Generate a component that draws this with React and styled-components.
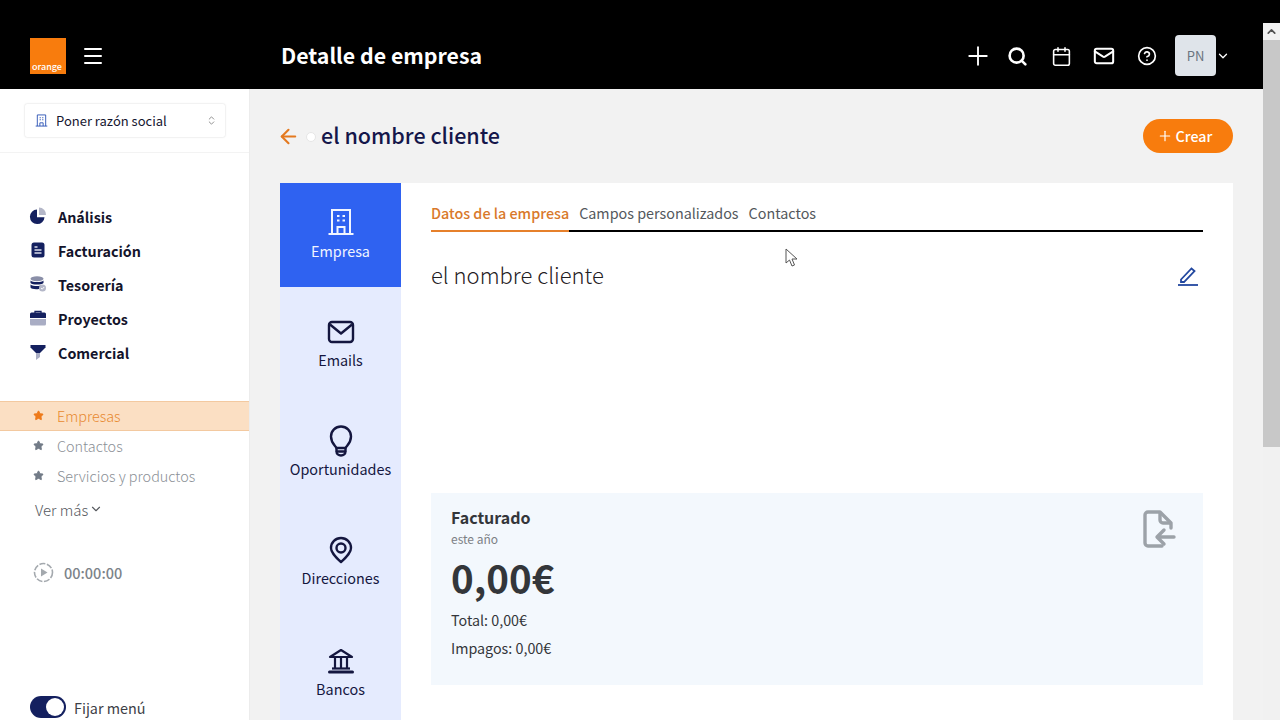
import styled, { createGlobalStyle } from "styled-components";
import { Plus, Search, Calendar, Mail, CircleHelp, ChevronDown, ChevronUp, ChevronsUpDown, Menu, ArrowLeft, Star } from "lucide-react";

const Global = createGlobalStyle`
  html, body {
    margin: 0;
    height: 100%;
    overflow: hidden;
    background: #000;
  }
  * { box-sizing: border-box; }
  body {
    font-family: "Noto Sans CJK JP", "Noto Sans", sans-serif;
  }
`;

const Page = styled.div`
  width: 1280px;
  height: 720px;
  display: flex;
  overflow: hidden;
  position: relative;
`;

const Main = styled.div`
  width: 1263px;
  display: flex;
  flex-direction: column;
`;

const Scrollbar = styled.div`
  width: 17px;
  margin-top: 23px;
  background: #f1f1f1;
  display: flex;
  flex-direction: column;
`;

const ScrollArrow = styled.div`
  height: 17px;
  display: flex;
  align-items: center;
  justify-content: center;
  color: #505050;
`;

const ScrollThumb = styled.div`
  height: 407px;
  background: #c8c8c8;
`;

const Header = styled.header`
  height: 89px;
  flex: none;
  background: #000;
  display: flex;
  align-items: center;
  padding: 23px 33px 0 30px;
  color: #fff;
`;

const Logo = styled.div`
  width: 36px;
  height: 36px;
  background: #f87c0d;
  display: flex;
  align-items: flex-end;
  padding: 0 0 1px 2px;
  color: #fff;
  font-size: 9px;
  font-weight: 500;
  line-height: 12px;
`;

const Burger = styled.div`
  margin-left: 15px;
  width: 24px;
  height: 24px;
  display: flex;
  color: #fff;
`;

const HeaderTitle = styled.h1`
  margin: 0 0 2px 176px;
  font-size: 21.3px;
  font-weight: 700;
  line-height: 30px;
  flex: 1;
`;

const HeaderIcons = styled.div`
  display: flex;
  align-items: center;
`;

const HeaderIcon = styled.div`
  width: 22px;
  height: 22px;
  display: flex;
  align-items: center;
  justify-content: center;
  margin-right: ${(p) => p.$gap}px;
  svg {
    flex: none;
  }
`;

const Avatar = styled.div`
  width: 41px;
  height: 41px;
  margin-top: -1px;
  border-radius: 4px;
  background: #dfe4ea;
  color: #6b7480;
  font-size: 13px;
  display: flex;
  align-items: center;
  justify-content: center;
`;

const Body = styled.div`
  flex: 1;
  min-height: 0;
  display: flex;
`;

const Sidebar = styled.aside`
  width: 250px;
  flex: none;
  background: #fff;
  border-right: 1px solid #ececec;
  display: flex;
  flex-direction: column;
`;

const CompanyBox = styled.div`
  height: 64px;
  flex: none;
  padding: 15px 25px 0;
  border-bottom: 1px solid #f3f3f3;
`;

const CompanySelect = styled.div`
  width: 200px;
  height: 33px;
  border-radius: 2px;
  box-shadow: 0 0 2px rgba(0, 0, 0, 0.2);
  display: flex;
  align-items: center;
  padding: 0 8px 0 10px;
  color: #15162f;
  font-size: 13px;
  gap: 8px;
  span {
    flex: 1;
  }
`;

const MainNav = styled.nav`
  margin-top: 46px;
  padding-left: 30px;
  display: flex;
  flex-direction: column;
`;

const MainNavItem = styled.div`
  height: 34px;
  display: flex;
  align-items: center;
  gap: 12px;
  color: #14142b;
  font-size: 14.3px;
  font-weight: 700;
`;

const NavGlyph = styled.svg`
  width: 16px;
  height: 16px;
  flex: none;
  overflow: visible;
`;

const SubNav = styled.div`
  margin-top: 32px;
  display: flex;
  flex-direction: column;
`;

const SubNavItem = styled.div`
  height: 30px;
  display: flex;
  align-items: center;
  padding: 0 0 2px 33px;
  gap: 13px;
  font-size: 14.4px;
  font-weight: 300;
  color: ${(p) => (p.$active ? "#e8892f" : "#8b9096")};
  background: ${(p) => (p.$active ? "#fbdfc3" : "transparent")};
  box-shadow: ${(p) => (p.$active ? "inset 0 1px 0 #f3c9a0, inset 0 -1px 0 #f3c9a0" : "none")};
  svg {
    color: ${(p) => (p.$active ? "#ee7a1a" : "#727b87")};
    fill: currentColor;
  }
`;

const SeeMore = styled.div`
  margin: 3px 0 0 35px;
  height: 30px;
  display: flex;
  align-items: center;
  gap: 1px;
  font-size: 15px;
  font-weight: 300;
  color: #55595e;
`;

const Timer = styled.div`
  margin: 36px 0 0 33px;
  display: flex;
  align-items: center;
  gap: 10px;
  color: #7c8389;
  font-size: 14.5px;
  font-weight: 500;
  height: 24px;
`;

const PinRow = styled.div`
  margin: auto 0 1px 30px;
  height: 24px;
  display: flex;
  align-items: center;
  gap: 8px;
  font-size: 14.4px;
  color: #3d4047;
`;

const Toggle = styled.div`
  width: 36px;
  height: 22px;
  border-radius: 11px;
  background: #14205f;
  padding: 2px;
  display: flex;
  justify-content: flex-end;
  &::after {
    content: "";
    width: 18px;
    height: 18px;
    border-radius: 50%;
    background: #fff;
  }
`;

const Content = styled.main`
  flex: 1;
  min-width: 0;
  background: #f2f2f2;
  padding: 0 30px;
  display: flex;
  flex-direction: column;
`;

const TitleRow = styled.div`
  height: 94px;
  flex: none;
  display: flex;
  align-items: center;
  padding-bottom: 1px;
`;

const BackArrow = styled(ArrowLeft)`
  flex: none;
  margin: 2px 0 0 -3px;
`;

const BackDot = styled.span`
  width: 10px;
  height: 10px;
  border-radius: 50%;
  background: #fff;
  border: 1px solid #e6e6e6;
  margin: 2px 5px 0 6px;
`;

const PageTitle = styled.h2`
  flex: 1;
  margin: 0 0 2px;
  color: #15164a;
  font-size: 21.5px;
  font-weight: 500;
  line-height: 32px;
`;

const CreateButton = styled.button`
  width: 90px;
  height: 34px;
  border: none;
  border-radius: 17px;
  background: #f87c0d;
  color: #fff;
  font-family: inherit;
  font-size: 14.3px;
  font-weight: 500;
  display: flex;
  align-items: center;
  justify-content: center;
  gap: 3px;
  padding: 0 7px 0 0;
`;

const Card = styled.section`
  flex: 1;
  background: #fff;
  display: flex;
  min-height: 0;
`;

const SideTabs = styled.div`
  width: 121px;
  flex: none;
  background: #e5ebfe;
  display: flex;
  flex-direction: column;
`;

const SideTab = styled.div`
  height: ${(p) => p.$h}px;
  flex: none;
  display: flex;
  flex-direction: column;
  align-items: center;
  padding-top: ${(p) => p.$top}px;
  gap: ${(p) => (p.$active ? 5 : 4)}px;
  font-size: 14.4px;
  line-height: 20px;
  color: ${(p) => (p.$active ? "#f1f5ff" : "#14163f")};
  background: ${(p) => (p.$active ? "#2f62f1" : "transparent")};
  svg {
    width: 28px;
    height: 28px;
    flex: none;
    overflow: visible;
  }
`;

const Panel = styled.div`
  flex: 1;
  min-width: 0;
  padding: 0 30px;
  display: flex;
  flex-direction: column;
`;

const Tabs = styled.div`
  height: 49px;
  flex: none;
  display: flex;
  border-bottom: 2px solid #000;
  gap: 10px;
`;

const Tab = styled.div`
  height: 49px;
  padding-top: 20px;
  font-size: 14.35px;
  line-height: 20px;
  font-weight: ${(p) => (p.$active ? 500 : 400)};
  color: ${(p) => (p.$active ? "#d9792b" : "#53575c")};
  border-bottom: 2px solid ${(p) => (p.$active ? "#e6802b" : "transparent")};
`;

const NameRow = styled.div`
  height: 261px;
  flex: none;
  display: flex;
  justify-content: space-between;
  padding: 27px 4px 0 0;
  color: #1f2023;
  font-size: 22px;
  font-weight: 300;
  line-height: 30px;
  align-items: flex-start;
`;

const EditIcon = styled.svg`
  width: 22px;
  height: 22px;
  margin-top: 5px;
  color: #22479f;
`;

const InvoiceCard = styled.div`
  height: 192px;
  flex: none;
  background: #f3f8fd;
  padding: 14px 20px;
  display: flex;
  justify-content: space-between;
  color: #33363a;
`;

const InvoiceTitle = styled.div`
  font-size: 16px;
  font-weight: 700;
  line-height: 20px;
`;

const InvoiceSub = styled.div`
  margin-top: 3px;
  font-size: 12px;
  line-height: 18px;
  color: #7c8085;
`;

const InvoiceAmount = styled.div`
  font-size: 38.5px;
  font-weight: 700;
  line-height: 50px;
  margin: 4px 0 4px;
`;

const InvoiceLine = styled.div`
  font-size: 14.3px;
  line-height: 28px;
  font-weight: 400;
`;

const InvoiceIcon = styled.svg`
  width: 34px;
  height: 40px;
  margin: 3px 7px 0 0;
  color: #9ca2a8;
`;

const Cursor = styled.svg`
  position: absolute;
  left: 785px;
  top: 248px;
  width: 13px;
  height: 19px;
`;

const BuildingIcon = ({ size = 28, color = "currentColor" }) => (
  <svg width={size} height={size} viewBox="0 0 28 28" fill="none" stroke={color} strokeWidth="2">
    <path d="M5 26V2h18v24M1.5 26h25" />
    <path d="M10.5 26v-7h7v7" />
    <path d="M10 8h2.5M15.5 8h2.5M10 12.5h2.5M15.5 12.5h2.5" strokeWidth="2.2" />
  </svg>
);

const MailIcon = () => (
  <svg viewBox="0 0 28 28" fill="none" stroke="currentColor" strokeWidth="2.4" strokeLinejoin="round">
    <rect x="2" y="4" width="24" height="20" rx="3" />
    <path d="M3 6.5l11 9 11-9" />
  </svg>
);

const BulbIcon = () => (
  <svg viewBox="0 0 28 28" fill="none" stroke="currentColor" strokeWidth="2.4" strokeLinecap="round">
    <path d="M9.5 21C8 18.5 4 16 4 9.5a10 10 0 0 1 20 0C24 16 20 18.5 18.5 21z" />
    <path d="M9.5 21v3.5a4.5 4 0 0 0 9 0V21" />
    <path d="M10 24.5h8" />
  </svg>
);

const PinIcon = () => (
  <svg viewBox="0 0 28 28" fill="none" stroke="currentColor" strokeWidth="2.4" strokeLinejoin="round">
    <path d="M14 26S4 17.5 4 12a10 10 0 0 1 20 0c0 5.5-10 14-10 14z" />
    <circle cx="14" cy="12" r="4.5" />
  </svg>
);

const BankIcon = () => (
  <svg viewBox="0 0 28 28" fill="none" stroke="currentColor" strokeWidth="2.2" strokeLinejoin="round">
    <path d="M3 10L14 3l11 7z" />
    <path d="M8 10v12M14 10v12M20 10v12" />
    <path d="M5 21.5h18" />
    <path d="M2.5 25h23" strokeWidth="3" strokeLinecap="round" />
  </svg>
);

export default function App() {
  return (
    <Page>
      <Global />
      <Main>
        <Header>
          <Logo>orange</Logo>
          <Burger>
            <Menu size={24} />
          </Burger>
          <HeaderTitle>Detalle de empresa</HeaderTitle>
          <HeaderIcons>
            <HeaderIcon $gap={17.5}><Plus size={30} strokeWidth={1.5} /></HeaderIcon>
            <HeaderIcon $gap={21.5}><Search size={21} strokeWidth={3} /></HeaderIcon>
            <HeaderIcon $gap={20.5}><Calendar size={21} strokeWidth={1.8} /></HeaderIcon>
            <HeaderIcon $gap={21.5}><Mail size={22} strokeWidth={2.2} /></HeaderIcon>
            <HeaderIcon $gap={17}><CircleHelp size={20} strokeWidth={2} /></HeaderIcon>
          </HeaderIcons>
          <HeaderIcons>
            <Avatar>PN</Avatar>
            <ChevronDown size={14} strokeWidth={2.2} />
          </HeaderIcons>
        </Header>
        <Body>
          <Sidebar>
            <CompanyBox>
              <CompanySelect>
                <BuildingIcon size={13} color="#2f55b5" />
                <span>Poner razón social</span>
                <ChevronsUpDown size={11} color="#888" />
              </CompanySelect>
            </CompanyBox>
            <MainNav>
              <MainNavItem>
                <NavGlyph viewBox="0 0 16 16">
                  <path d="M7 1.5a7.3 7.3 0 1 0 7.5 7.7H7z" fill="#14205f" />
                  <path d="M9 -.5a7 7 0 0 1 7 7.5H9z" fill="#b4b7c8" />
                </NavGlyph>
                Análisis
              </MainNavItem>
              <MainNavItem>
                <NavGlyph viewBox="0 0 16 16">
                  <rect x="1.5" y="0.5" width="13" height="15" rx="2.5" fill="#14205f" />
                  <path d="M4.5 5h3M4.5 8h7M4.5 11h7" stroke="#d9dcea" strokeWidth="1.3" />
                </NavGlyph>
                Facturación
              </MainNavItem>
              <MainNavItem>
                <NavGlyph viewBox="0 0 16 16">
                  <ellipse cx="7" cy="2.8" rx="6.5" ry="2.5" fill="#8a8fa8" />
                  <path d="M.5 4.5c2 2 11 2 13 0v2.5c-2 2-11 2-13 0z" fill="#14205f" />
                  <path d="M.5 8.5c2 1.8 9 2 11 .8L9 13c-3 .5-8 .2-8.500-1.500z" fill="#14205f" />
                  <circle cx="12.500" cy="12" r="3.500" fill="#b4b7c8" />
                  <path d="M11 12l1.200 1.200 2-2.200" stroke="#fff" strokeWidth="0.9" fill="none" />
                </NavGlyph>
                Tesorería
              </MainNavItem>
              <MainNavItem>
                <NavGlyph viewBox="0 0 16 16">
                  <path d="M5 3V1.500h6V3" stroke="#14205f" strokeWidth="1.300" fill="none" />
                  <path d="M0 4a1.500 1.500 0 0 1 1.500-1.500h13A1.500 1.500 0 0 1 16 4v4H0z" fill="#14205f" />
                  <path d="M0 9h16v5a1.500 1.500 0 0 1-1.500 1.500h-13A1.500 1.500 0 0 1 0 14z" fill="#a9adc4" />
                </NavGlyph>
                Proyectos
              </MainNavItem>
              <MainNavItem>
                <NavGlyph viewBox="0 0 16 16">
                  <path d="M.5 1h15v2.500L10 9H6L.5 3.500z" fill="#14205f" />
                  <path d="M6 9h4v4l-4 3z" fill="#a9adc4" />
                </NavGlyph>
                Comercial
              </MainNavItem>
            </MainNav>
            <SubNav>
              <SubNavItem $active>
                <Star size={11} />
                Empresas
              </SubNavItem>
              <SubNavItem>
                <Star size={11} />
                Contactos
              </SubNavItem>
              <SubNavItem>
                <Star size={11} />
                Servicios y productos
              </SubNavItem>
            </SubNav>
            <SeeMore>
              Ver más
              <ChevronDown size={14} />
            </SeeMore>
            <Timer>
              <svg width="21" height="21" viewBox="0 0 21 21" fill="none">
                <circle cx="10.500" cy="10.500" r="9" stroke="#a4a9ae" strokeWidth="1.600" strokeDasharray="6 1.600" />
                <path d="M8 6.500l6.500 4-6.500 4z" fill="#a4a9ae" />
              </svg>
              00:00:00
            </Timer>
            <PinRow>
              <Toggle />
              Fijar menú
            </PinRow>
          </Sidebar>
          <Content>
            <TitleRow>
              <BackArrow size={23} color="#e4791f" strokeWidth={2.2} />
              <BackDot />
              <PageTitle>el nombre cliente</PageTitle>
              <CreateButton>
                <Plus size={16} strokeWidth={1.8} />
                Crear
              </CreateButton>
            </TitleRow>
            <Card>
              <SideTabs>
                <SideTab $active $h={104} $top={25}>
                  <BuildingIcon />
                  Empresa
                </SideTab>
                <SideTab $h={109} $top={31}>
                  <MailIcon />
                  Emails
                </SideTab>
                <SideTab $h={110} $top={31}>
                  <BulbIcon />
                  Oportunidades
                </SideTab>
                <SideTab $h={110} $top={30}>
                  <PinIcon />
                  Direcciones
                </SideTab>
                <SideTab $h={110} $top={31}>
                  <BankIcon />
                  Bancos
                </SideTab>
              </SideTabs>
              <Panel>
                <Tabs>
                  <Tab $active>Datos de la empresa</Tab>
                  <Tab>Campos personalizados</Tab>
                  <Tab>Contactos</Tab>
                </Tabs>
                <NameRow>
                  el nombre cliente
                  <EditIcon viewBox="0 0 22 22" fill="none" stroke="currentColor" strokeWidth="1.800">
                    <path d="M4 15.500L14.500 4.500l3 2.500L7 18H4z" />
                    <path d="M1 21h20" />
                  </EditIcon>
                </NameRow>
                <InvoiceCard>
                  <div>
                    <InvoiceTitle>Facturado</InvoiceTitle>
                    <InvoiceSub>este año</InvoiceSub>
                    <InvoiceAmount>0,00€</InvoiceAmount>
                    <InvoiceLine>Total: 0,00€</InvoiceLine>
                    <InvoiceLine>Impagos: 0,00€</InvoiceLine>
                  </div>
                  <InvoiceIcon viewBox="0 0 34 40" fill="none" stroke="currentColor" strokeWidth="3.400" strokeLinecap="round" strokeLinejoin="round">
                    <path d="M20 36H6a3 3 0 0 1-3-3V5a3 3 0 0 1 3-3h12l11 11v5" />
                    <path d="M18 3v7a3 3 0 0 0 3 3h7" />
                    <path d="M32 27H16M22 20l-7 7 7 7" />
                  </InvoiceIcon>
                </InvoiceCard>
              </Panel>
            </Card>
          </Content>
        </Body>
      </Main>
      <Scrollbar>
        <ScrollArrow>
          <ChevronUp size={13} strokeWidth={3} />
        </ScrollArrow>
        <ScrollThumb />
      </Scrollbar>
      <Cursor viewBox="0 0 13 19">
        <path d="M1 1v14l3.500-3 2.500 6 2.500-1-2.500-6h5z" fill="#fff" stroke="#555" strokeWidth="1" />
      </Cursor>
    </Page>
  );
}
